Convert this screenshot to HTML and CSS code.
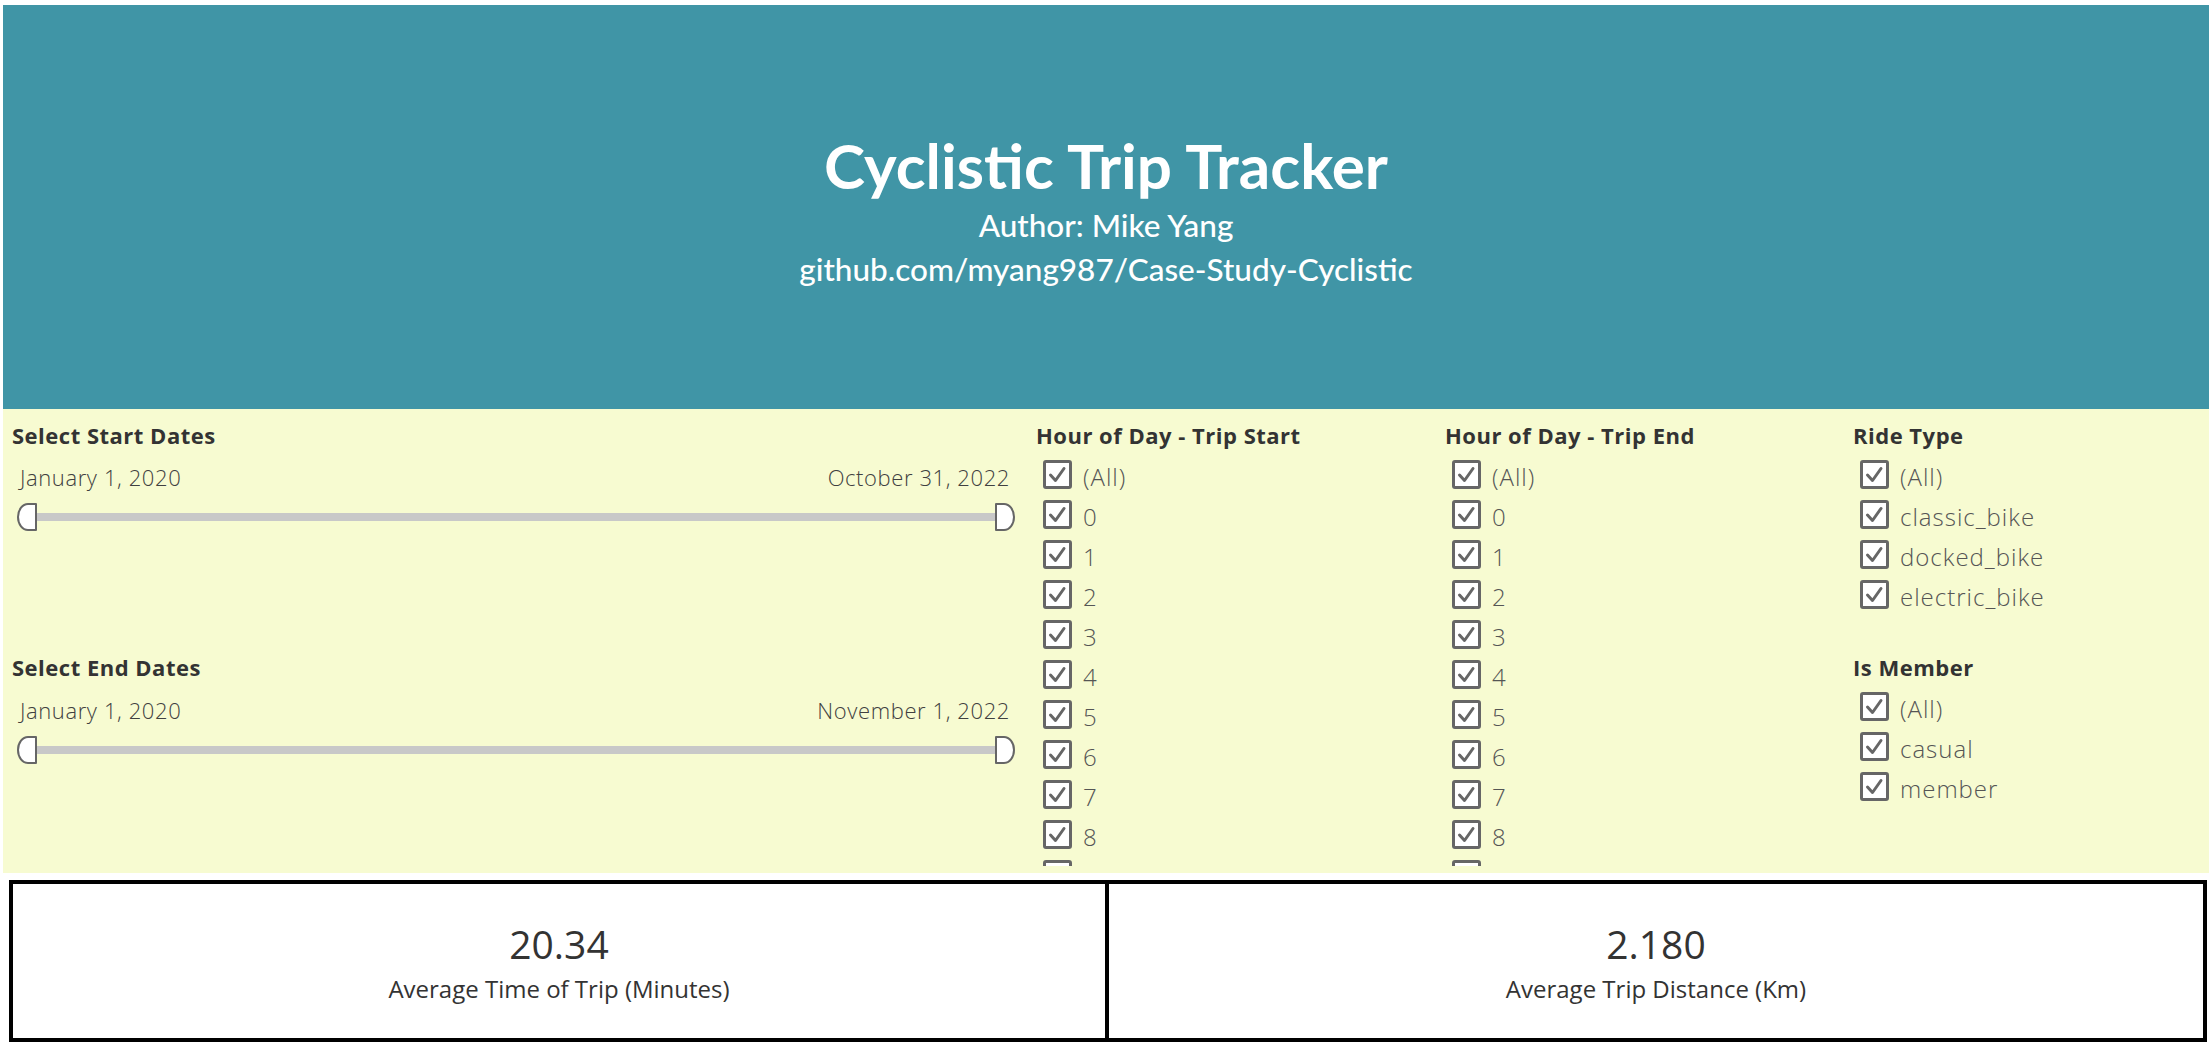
FILE: index.html
```html
<!DOCTYPE html>
<html lang="en">
<head>
<meta charset="utf-8">
<title>Cyclistic Trip Tracker</title>
<link rel="stylesheet" href="styles.css">
</head>
<body>
<div class="page">
  <header class="banner">
    <h1 class="title">Cyclistic Trip Tracker</h1>
    <p class="sub author">Author: Mike Yang</p>
    <p class="sub">github.com/myang987/Case-Study-Cyclistic</p>
  </header>

  <section class="filters">
    <div class="col">
      <div class="range">
        <h2 class="fh">Select Start Dates</h2>
        <div class="range-labels"><span>January 1, 2020</span><span>October 31, 2022</span></div>
        <div class="slider"><span class="knob knob-l"></span><span class="track"></span><span class="knob knob-r"></span></div>
      </div>
      <div class="range range-end">
        <h2 class="fh">Select End Dates</h2>
        <div class="range-labels"><span>January 1, 2020</span><span>November 1, 2022</span></div>
        <div class="slider"><span class="knob knob-l"></span><span class="track"></span><span class="knob knob-r"></span></div>
      </div>
    </div>

    <div class="col">
      <h2 class="fh">Hour of Day - Trip Start</h2>
      <ul class="checks clipped">
        <li class="check"><span class="box"><svg viewBox="0 0 23 23"><path d="M4.5 12 L9.5 17.5 L18 5.5"/></svg></span><span class="lbl">(All)</span></li>
        <li class="check"><span class="box"><svg viewBox="0 0 23 23"><path d="M4.5 12 L9.5 17.5 L18 5.5"/></svg></span><span class="lbl">0</span></li>
        <li class="check"><span class="box"><svg viewBox="0 0 23 23"><path d="M4.5 12 L9.5 17.5 L18 5.5"/></svg></span><span class="lbl">1</span></li>
        <li class="check"><span class="box"><svg viewBox="0 0 23 23"><path d="M4.5 12 L9.5 17.5 L18 5.5"/></svg></span><span class="lbl">2</span></li>
        <li class="check"><span class="box"><svg viewBox="0 0 23 23"><path d="M4.5 12 L9.5 17.5 L18 5.5"/></svg></span><span class="lbl">3</span></li>
        <li class="check"><span class="box"><svg viewBox="0 0 23 23"><path d="M4.5 12 L9.5 17.5 L18 5.5"/></svg></span><span class="lbl">4</span></li>
        <li class="check"><span class="box"><svg viewBox="0 0 23 23"><path d="M4.5 12 L9.5 17.5 L18 5.5"/></svg></span><span class="lbl">5</span></li>
        <li class="check"><span class="box"><svg viewBox="0 0 23 23"><path d="M4.5 12 L9.5 17.5 L18 5.5"/></svg></span><span class="lbl">6</span></li>
        <li class="check"><span class="box"><svg viewBox="0 0 23 23"><path d="M4.5 12 L9.5 17.5 L18 5.5"/></svg></span><span class="lbl">7</span></li>
        <li class="check"><span class="box"><svg viewBox="0 0 23 23"><path d="M4.5 12 L9.5 17.5 L18 5.5"/></svg></span><span class="lbl">8</span></li>
        <li class="check"><span class="box"><svg viewBox="0 0 23 23"><path d="M4.5 12 L9.5 17.5 L18 5.5"/></svg></span><span class="lbl">9</span></li>
      </ul>
    </div>

    <div class="col">
      <h2 class="fh">Hour of Day - Trip End</h2>
      <ul class="checks clipped">
        <li class="check"><span class="box"><svg viewBox="0 0 23 23"><path d="M4.5 12 L9.5 17.5 L18 5.5"/></svg></span><span class="lbl">(All)</span></li>
        <li class="check"><span class="box"><svg viewBox="0 0 23 23"><path d="M4.5 12 L9.5 17.5 L18 5.5"/></svg></span><span class="lbl">0</span></li>
        <li class="check"><span class="box"><svg viewBox="0 0 23 23"><path d="M4.5 12 L9.5 17.5 L18 5.5"/></svg></span><span class="lbl">1</span></li>
        <li class="check"><span class="box"><svg viewBox="0 0 23 23"><path d="M4.5 12 L9.5 17.5 L18 5.5"/></svg></span><span class="lbl">2</span></li>
        <li class="check"><span class="box"><svg viewBox="0 0 23 23"><path d="M4.5 12 L9.5 17.5 L18 5.5"/></svg></span><span class="lbl">3</span></li>
        <li class="check"><span class="box"><svg viewBox="0 0 23 23"><path d="M4.5 12 L9.5 17.5 L18 5.5"/></svg></span><span class="lbl">4</span></li>
        <li class="check"><span class="box"><svg viewBox="0 0 23 23"><path d="M4.5 12 L9.5 17.5 L18 5.5"/></svg></span><span class="lbl">5</span></li>
        <li class="check"><span class="box"><svg viewBox="0 0 23 23"><path d="M4.5 12 L9.5 17.5 L18 5.5"/></svg></span><span class="lbl">6</span></li>
        <li class="check"><span class="box"><svg viewBox="0 0 23 23"><path d="M4.5 12 L9.5 17.5 L18 5.5"/></svg></span><span class="lbl">7</span></li>
        <li class="check"><span class="box"><svg viewBox="0 0 23 23"><path d="M4.5 12 L9.5 17.5 L18 5.5"/></svg></span><span class="lbl">8</span></li>
        <li class="check"><span class="box"><svg viewBox="0 0 23 23"><path d="M4.5 12 L9.5 17.5 L18 5.5"/></svg></span><span class="lbl">9</span></li>
      </ul>
    </div>

    <div class="col">
      <h2 class="fh">Ride Type</h2>
      <ul class="checks">
        <li class="check"><span class="box"><svg viewBox="0 0 23 23"><path d="M4.5 12 L9.5 17.5 L18 5.5"/></svg></span><span class="lbl">(All)</span></li>
        <li class="check"><span class="box"><svg viewBox="0 0 23 23"><path d="M4.5 12 L9.5 17.5 L18 5.5"/></svg></span><span class="lbl">classic_bike</span></li>
        <li class="check"><span class="box"><svg viewBox="0 0 23 23"><path d="M4.5 12 L9.5 17.5 L18 5.5"/></svg></span><span class="lbl">docked_bike</span></li>
        <li class="check"><span class="box"><svg viewBox="0 0 23 23"><path d="M4.5 12 L9.5 17.5 L18 5.5"/></svg></span><span class="lbl">electric_bike</span></li>
      </ul>
      <h2 class="fh member-head">Is Member</h2>
      <ul class="checks">
        <li class="check"><span class="box"><svg viewBox="0 0 23 23"><path d="M4.5 12 L9.5 17.5 L18 5.5"/></svg></span><span class="lbl">(All)</span></li>
        <li class="check"><span class="box"><svg viewBox="0 0 23 23"><path d="M4.5 12 L9.5 17.5 L18 5.5"/></svg></span><span class="lbl">casual</span></li>
        <li class="check"><span class="box"><svg viewBox="0 0 23 23"><path d="M4.5 12 L9.5 17.5 L18 5.5"/></svg></span><span class="lbl">member</span></li>
      </ul>
    </div>
  </section>

  <section class="kpis">
    <div class="kpi">
      <div class="kpi-value">20.34</div>
      <div class="kpi-label">Average Time of Trip (Minutes)</div>
    </div>
    <div class="kpi kpi-right">
      <div class="kpi-value">2.180</div>
      <div class="kpi-label">Average Trip Distance (Km)</div>
    </div>
  </section>
</div>
</body>
</html>
```

FILE: styles.css
```css
html, body {
  margin: 0;
  padding: 0;
  background: #ffffff;
}

.page {
  padding: 5px 3px 0 3px;
  font-family: "Open Sans", "Noto Sans", sans-serif;
}

/* ---------- banner ---------- */
.banner {
  height: 404px;
  box-sizing: border-box;
  padding-top: 123px;
  background: #4095a6;
  color: #ffffff;
  text-align: center;
}

.title {
  margin: 0;
  font: 700 62px/74px Lato, "Open Sans", sans-serif;
}

.sub {
  margin: 0;
  font: 500 31.5px/44px Lato, "Open Sans", sans-serif;
}

.author {
  margin-top: 1px;
}

/* ---------- filters ---------- */
.filters {
  display: grid;
  grid-template-columns: 1024px 409px 408px 1fr;
  height: 464px;
  box-sizing: border-box;
  padding: 12px 0 0 9px;
  background: #f7fbd1;
}

.col {
  min-width: 0;
}

.fh {
  margin: 0;
  font: 700 22px/28px "Open Sans", sans-serif;
  letter-spacing: 0.5px;
  color: #333333;
  white-space: nowrap;
}

.range {
  width: 1003px;
}

.range-end {
  margin-top: 122px;
}

.range-labels {
  display: flex;
  justify-content: space-between;
  margin-top: 14px;
  padding: 0 5px 0 8px;
  font: 300 22px/28px "Open Sans", sans-serif;
  letter-spacing: 0.6px;
  color: #404040;
}

.range-end .range-labels {
  margin-top: 15px;
}

.slider {
  display: flex;
  align-items: center;
  height: 28px;
  margin-top: 12px;
  padding-left: 5px;
}

.knob {
  flex: none;
  width: 20px;
  height: 28px;
  box-sizing: border-box;
  border: 2px solid #666666;
  background: #ffffff;
}

.knob-l {
  border-radius: 11px 1px 1px 11px / 14px 1px 1px 14px;
}

.knob-r {
  border-radius: 1px 11px 11px 1px / 1px 14px 14px 1px;
}

.track {
  flex: 1;
  height: 8px;
  background: #c8c8c8;
}

/* ---------- checklists ---------- */
.checks {
  list-style: none;
  margin: 6px 0 0;
  padding: 0 0 0 7px;
}

.clipped {
  height: 411px;
  overflow: hidden;
}

.check {
  display: flex;
  align-items: flex-start;
  height: 40px;
}

.box {
  flex: none;
  display: block;
  width: 29px;
  height: 29px;
  margin-top: 5px;
  box-sizing: border-box;
  border: 3px solid #666666;
  border-radius: 3px;
  background: #ffffff;
}

.box svg {
  display: block;
  width: 23px;
  height: 23px;
}

.box path {
  fill: none;
  stroke: #666666;
  stroke-width: 3;
  stroke-linecap: round;
  stroke-linejoin: round;
}

.lbl {
  margin-left: 11px;
  padding-top: 5px;
  font: 300 24px/34px "Open Sans", sans-serif;
  letter-spacing: 1px;
  color: #555555;
  white-space: nowrap;
}

.member-head {
  margin-top: 38px;
}

/* ---------- KPIs ---------- */
.kpis {
  display: grid;
  grid-template-columns: 1092px 1fr;
  height: 162px;
  margin: 7px 2px 0 6px;
  box-sizing: border-box;
  border: 4px solid #000000;
  background: #ffffff;
}

.kpi {
  padding-top: 35px;
  text-align: center;
  color: #333333;
}

.kpi-right {
  border-left: 4px solid #000000;
}

.kpi-value {
  font: 400 39px/50px "Open Sans", sans-serif;
}

.kpi-label {
  margin-top: 5px;
  font: 400 24px/30px "Open Sans", sans-serif;
}
```
